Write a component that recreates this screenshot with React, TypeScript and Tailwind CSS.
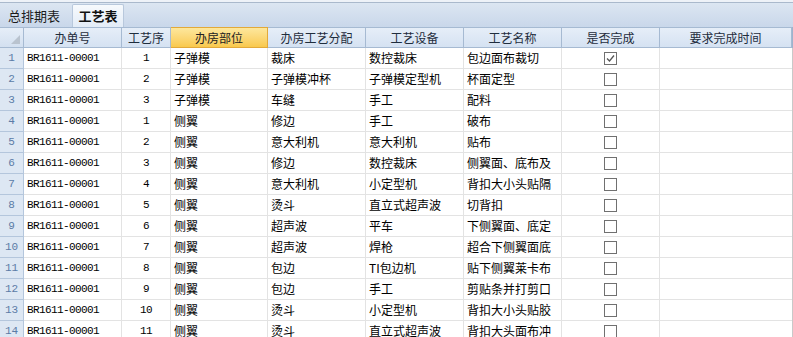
import React from "react";

const rows: [string, string, string, string, string, string, boolean][] = [
  ["BR1611-00001", "1", "子弹模", "裁床", "数控裁床", "包边面布裁切", true],
  ["BR1611-00001", "2", "子弹模", "子弹模冲杯", "子弹模定型机", "杯面定型", false],
  ["BR1611-00001", "3", "子弹模", "车缝", "手工", "配料", false],
  ["BR1611-00001", "1", "侧翼", "修边", "手工", "破布", false],
  ["BR1611-00001", "2", "侧翼", "意大利机", "意大利机", "贴布", false],
  ["BR1611-00001", "3", "侧翼", "修边", "数控裁床", "侧翼面、底布及", false],
  ["BR1611-00001", "4", "侧翼", "意大利机", "小定型机", "背扣大小头贴隔", false],
  ["BR1611-00001", "5", "侧翼", "烫斗", "直立式超声波", "切背扣", false],
  ["BR1611-00001", "6", "侧翼", "超声波", "平车", "下侧翼面、底定", false],
  ["BR1611-00001", "7", "侧翼", "超声波", "焊枪", "超合下侧翼面底", false],
  ["BR1611-00001", "8", "侧翼", "包边", "TI包边机", "贴下侧翼莱卡布", false],
  ["BR1611-00001", "9", "侧翼", "包边", "手工", "剪贴条并打剪口", false],
  ["BR1611-00001", "10", "侧翼", "烫斗", "小定型机", "背扣大小头贴胶", false],
  ["BR1611-00001", "11", "侧翼", "烫斗", "直立式超声波", "背扣大头面布冲", false],
];

const cjk = { fontFamily: '"Noto Sans CJK SC", "Noto Sans", sans-serif' };
const mono = { fontFamily: '"Liberation Mono", "DejaVu Sans Mono", monospace' };

const headers = ["办单号", "工艺序", "办房部位", "办房工艺分配", "工艺设备", "工艺名称", "是否完成", "要求完成时间"];

const gridCols = "grid grid-cols-[24px_98px_49px_97px_98px_98px_98px_98px_132px]";

function Check({ on }: { on: boolean }) {
  return (
    <div className="w-[13px] h-[13px] border border-[#707070] bg-white flex items-center justify-center">
      {on && (
        <svg width="11" height="11" viewBox="0 0 11 11">
          <polyline points="2,5.5 4.5,8 9,2.5" fill="none" stroke="#555" strokeWidth="1.3" />
        </svg>
      )}
    </div>
  );
}

export default function App() {
  return (
    <div className="w-[793px] h-[337px] overflow-hidden bg-white text-[12px] text-black" style={cjk}>
      {/* tab strip */}
      <div className="h-[27px] bg-[#eef2f8] relative">
        <div className="absolute left-0 right-0 top-[2px] h-[25px] border-t border-[#aab9cc] bg-gradient-to-b from-[#dce6f2] to-[#c9d7ea] flex items-end">
          <div className="h-[23px] px-[8px] flex items-center text-[13px] text-[#1b1b1b]">总排期表</div>
          <div className="h-[23px] w-[52px] ml-[4px] flex items-center justify-center text-[13px] font-bold text-[#111] bg-gradient-to-b from-[#f7fafd] to-[#e3ecf7] border-x border-t border-[#b8c8dc] rounded-t-[2px]">
            工艺表
          </div>
        </div>
      </div>
      {/* header */}
      <div className={`${gridCols} h-[21px] border-r border-[#9eb3cc]`}>
        <div className="border-r border-b border-t border-[#a6bad2] bg-gradient-to-b from-[#e6eef8] to-[#d3e0f0] relative">
          <svg className="absolute right-[3px] bottom-[3px]" width="9" height="9" viewBox="0 0 9 9">
            <polygon points="9,0 9,9 0,9" fill="#b9c3cf" />
          </svg>
        </div>
        {headers.map((h, i) => (
          <div
            key={h}
            className={
              i === 2
                ? "border-r border-b border-t border-[#e2a93a] bg-gradient-to-b from-[#fde79c] to-[#f9c94c] flex items-center justify-center text-[#222]"
                : "border-r border-b border-t border-[#a6bad2] bg-gradient-to-b from-[#e6eef8] to-[#d5e2f2] flex items-center justify-center text-[#1f2d3d]"
            }
          >
            {h}
          </div>
        ))}
      </div>
      {/* body */}
      {rows.map((r, idx) => (
        <div key={idx} className={`${gridCols} h-[21px] border-r border-[#c9c9c9]`}>
          <div
            className="border-r border-b border-[#b4c6dc] bg-[#dde7f3] flex items-center justify-center text-[#5b7ba6] text-[11px]"
            style={mono}
          >
            {idx + 1}
          </div>
          <div
            className="border-r border-b border-[#e3e3e3] flex items-center pl-[3px] text-[11px] tracking-[-0.6px] whitespace-nowrap overflow-hidden"
            style={mono}
          >
            {r[0]}
          </div>
          <div
            className="border-r border-b border-[#e3e3e3] flex items-center justify-center text-[11px] tracking-[-0.6px]"
            style={mono}
          >
            {r[1]}
          </div>
          {[r[2], r[3], r[4], r[5]].map((t, j) => (
            <div key={j} className="border-r border-b border-[#e3e3e3] flex items-center pl-[3px] whitespace-nowrap overflow-hidden">
              {t}
            </div>
          ))}
          <div className="border-r border-b border-[#e3e3e3] flex items-center justify-center">
            <Check on={r[6]} />
          </div>
          <div className="border-b border-[#e3e3e3]" />
        </div>
      ))}
    </div>
  );
}
